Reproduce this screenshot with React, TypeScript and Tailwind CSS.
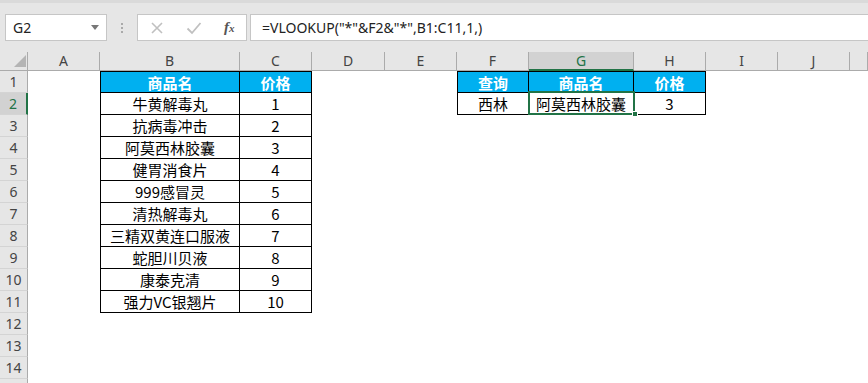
import React from "react";

const cols = ["A", "B", "C", "D", "E", "F", "G", "H", "I", "J", ""];
const widths = "28px 72px 140px 72px 73px 72px 72px 105px 72px 72px 72px 18px";

const drugs = [
  "商品名",
  "牛黄解毒丸",
  "抗病毒冲击",
  "阿莫西林胶囊",
  "健胃消食片",
  "999感冒灵",
  "清热解毒丸",
  "三精双黄连口服液",
  "蛇胆川贝液",
  "康泰克清",
  "强力VC银翘片",
];

const cellFont = { fontFamily: '"Noto Sans CJK SC", "Noto Sans", sans-serif' };
const uiFont = { fontFamily: '"Noto Sans", "Liberation Sans", sans-serif' };

function Cell({ text, head, top, left }: { text?: string; head?: boolean; top?: boolean; left?: boolean }) {
  if (text === undefined) return <div className="h-[22px] bg-white" />;
  return (
    <div
      style={cellFont}
      className={`h-[22px] flex items-center justify-center border-r border-b border-black text-[15px] leading-none ${
        top ? "border-t" : ""
      } ${left ? "border-l" : ""} ${head ? "bg-[#00b0f0] text-white font-bold" : "bg-white text-black"}`}
    >
      {text}
    </div>
  );
}

export default function App() {
  const rows = Array.from({ length: 14 }, (_, i) => i + 1);

  const getCell = (r: number, c: number) => {
    // c: 0=A ... 10=K
    const head = r === 1;
    if (c === 1 && r <= 11) return <Cell key={c} text={drugs[r - 1]} head={head} top={head} left />;
    if (c === 2 && r <= 11) return <Cell key={c} text={head ? "价格" : String(r - 1)} head={head} top={head} />;
    if (c === 5 && r <= 2) return <Cell key={c} text={head ? "查询" : "西林"} head={head} top={head} left />;
    if (c === 6 && r <= 2) return <Cell key={c} text={head ? "商品名" : "阿莫西林胶囊"} head={head} top={head} />;
    if (c === 7 && r <= 2) return <Cell key={c} text={head ? "价格" : "3"} head={head} top={head} />;
    return <Cell key={c} />;
  };

  return (
    <div className="w-[868px] h-[383px] overflow-hidden bg-white relative">
      {/* toolbar */}
      <div className="h-[52px] bg-[#e6e6e6] relative">
        <div className="h-[3px] bg-[#dadada]" />
        <div className="flex items-start pt-[11px]">
          <div
            style={uiFont}
            className="ml-[5px] w-[102px] h-[27px] bg-white border border-[#c6c6c6] flex items-center justify-between pl-[7px] pr-[7px] text-[14px] text-[#222]"
          >
            <span>G2</span>
            <span className="w-0 h-0 border-l-[4px] border-r-[4px] border-t-[5px] border-l-transparent border-r-transparent border-t-[#777]" />
          </div>
          <div className="w-[30px] h-[27px] flex flex-col items-center justify-center gap-[2px]">
            <span className="w-[2px] h-[2px] bg-[#aaa]" />
            <span className="w-[2px] h-[2px] bg-[#aaa]" />
            <span className="w-[2px] h-[2px] bg-[#aaa]" />
          </div>
          <div className="w-[110px] h-[27px] bg-white border border-[#c6c6c6] flex items-center pl-[12px]">
            <svg width="14" height="14" viewBox="0 0 14 14" className="mr-[22px]">
              <path d="M2 2 L12 12 M12 2 L2 12" stroke="#c0c0c0" strokeWidth="1.6" />
            </svg>
            <svg width="16" height="14" viewBox="0 0 16 14" className="mr-[22px]">
              <path d="M1.5 7.5 L6 12 L14.5 2" stroke="#c0c0c0" strokeWidth="1.8" fill="none" />
            </svg>
            <span
              style={{ fontFamily: '"Liberation Serif", serif' }}
              className="italic text-[15px] text-[#555] font-semibold"
            >
              f<span className="text-[11px]">x</span>
            </span>
          </div>
          <div
            style={uiFont}
            className="ml-[3px] flex-1 h-[27px] bg-white border border-r-0 border-[#c6c6c6] flex items-center pl-[11px] text-[14px] text-[#222]"
          >
            =VLOOKUP("*"&amp;F2&amp;"*",B1:C11,1,)
          </div>
        </div>
      </div>

      {/* sheet */}
      <div className="grid" style={{ gridTemplateColumns: widths }}>
        {/* header row */}
        <div className="h-[19px] bg-[#e6e6e6] border-r border-b border-[#ababab] flex items-end justify-end pr-[1px] pb-[3px]">
          <svg width="12" height="12" viewBox="0 0 12 12">
            <path d="M12 0 L12 12 L0 12 Z" fill="#b4b4b4" />
          </svg>
        </div>
        {cols.map((c, i) => (
          <div
            key={i}
            style={uiFont}
            className={`h-[19px] flex items-center justify-center text-[14px] leading-none border-r ${
              c === "G"
                ? "bg-[#d2d2d2] text-[#217346] border-b-2 border-b-[#217346] border-r-[#ababab]"
                : "bg-[#e6e6e6] text-[#444] border-b border-[#ababab]"
            }`}
          >
            {c}
          </div>
        ))}

        {rows.map((r) => (
          <React.Fragment key={r}>
            <div
              style={uiFont}
              className={`h-[22px] flex items-center justify-center text-[14px] leading-none border-b border-b-[#d4d4d4] ${
                r === 2
                  ? "bg-[#d2d2d2] text-[#217346] border-r-2 border-r-[#217346]"
                  : "bg-[#e6e6e6] text-[#444] border-r border-r-[#ababab]"
              }`}
            >
              {r}
            </div>
            {cols.map((_, c) => getCell(r, c))}
          </React.Fragment>
        ))}

        {/* partially visible row 15 */}
        <div className="h-[22px] bg-[#e6e6e6] border-r border-r-[#ababab]" />
      </div>

      {/* selection on G2 */}
      <div className="absolute left-[528px] top-[91px] w-[107px] h-[24px] border-2 border-[#217346] pointer-events-none" />
      <div className="absolute left-[632px] top-[111px] w-[6px] h-[6px] bg-[#217346] border border-white" />
    </div>
  );
}
